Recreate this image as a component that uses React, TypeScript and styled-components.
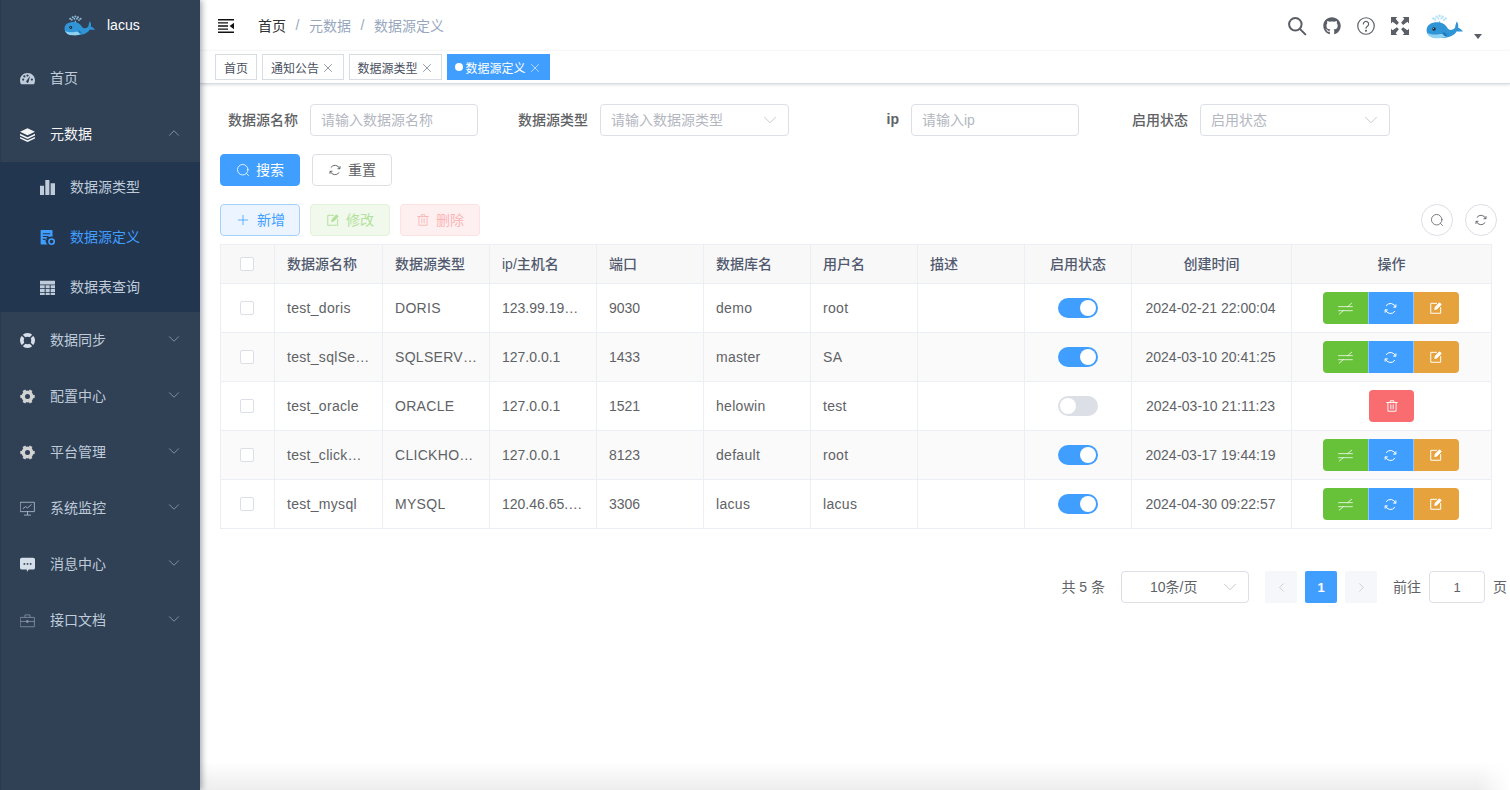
import React from 'react';
import styled, { createGlobalStyle } from 'styled-components';
import { ChevronDown, ChevronUp, ChevronLeft, ChevronRight, Plus, X } from 'lucide-react';
import { FaGithub } from 'react-icons/fa';

const Global = createGlobalStyle`
  html, body { margin: 0; padding: 0; height: 100%; overflow: hidden; background: #fff; }
  body, input, button { font-family: "Liberation Sans", "Noto Sans CJK SC", sans-serif; }
  * { box-sizing: border-box; }
`;

const Shell = styled.div`display: flex; width: 1510px; height: 790px; overflow: hidden; position: relative;`;
const Sidebar = styled.aside`
  width: 200px; flex: none; height: 790px; background: #304156; position: relative; z-index: 3;
  box-shadow: 2px 0 6px rgba(0,21,41,.35), inset 1px 0 0 #2a394c;
`;
const Logo = styled.div`
  height: 50px; display: flex; align-items: center; gap: 12px; padding-left: 64px;
  color: #fff; font-size: 14px;
`;
const MenuRow = styled.div<{ $open?: boolean }>`
  height: 56px; display: flex; align-items: center; padding: 0 17px 0 20px; gap: 15px; font-size: 14px;
  color: ${p => (p.$open ? '#f4f4f5' : '#bfcbd9')};
`;
const MenuLabel = styled.span`flex: 1; padding-bottom: 2px;`;
const Arrow = styled.span`display: block; color: #a9b5c3; height: 18px; margin-bottom: 2px;`;
const SubList = styled.div`background: #233650;`;
const SubRow = styled.div<{ $active?: boolean }>`
  height: 50px; display: flex; align-items: center; padding-left: 40px; gap: 15px; font-size: 14px;
  color: ${p => (p.$active ? '#409eff' : '#bfcbd9')};
`;
const Main = styled.main`flex: 1; min-width: 0; display: flex; flex-direction: column;`;
const Header = styled.header`
  height: 51px; flex: none; display: flex; align-items: center; padding-left: 18px; background: #fff;
  box-shadow: 0 1px 3px rgba(0,21,41,.06); position: relative; z-index: 1;
`;
const Crumbs = styled.nav`display: flex; align-items: center; font-size: 14px; margin-left: 24px; color: #97a8be; padding-bottom: 2px;`;
const CrumbHome = styled.span`color: #303133;`;
const Sep = styled.i`font-style: normal; color: #97a8be; margin: 0 9px; font-weight: 400; width: 5px; text-align: center; font-size: 14px;`;
const HeaderRight = styled.div`margin-left: auto; display: flex; align-items: center; gap: 16px; padding-right: 28px; color: #5a5e66;`;
const AvatarWrap = styled.div`display: flex; align-items: flex-end; margin-left: 1px; padding-top: 2px; position: relative; gap: 11px;`;
const Caret = styled.i`
  width: 0; height: 0; border-left: 4px solid transparent; border-right: 4px solid transparent;
  border-top: 5px solid #5a5e66; margin-bottom: 0; margin-right: 0;
`;
const TagBar = styled.div`
  height: 33px; flex: none; display: flex; align-items: flex-start; gap: 5px; padding: 3px 0 0 15px; background: #fff;
  border-bottom: 1px solid #d8dce5; box-shadow: 0 1px 3px rgba(0,0,0,.12), 0 0 3px rgba(0,0,0,.04);
  position: relative; z-index: 1;
`;
const Tag = styled.div<{ $active?: boolean; $w: number }>`
  height: 26px; width: ${p => p.$w}px; display: flex; align-items: center; justify-content: center; font-size: 12px;
  border: 1px solid ${p => (p.$active ? '#409eff' : '#d8dce5')};
  background: ${p => (p.$active ? '#409eff' : '#fff')}; color: ${p => (p.$active ? '#fff' : '#495060')};
  svg { margin-left: 2px; margin-top: 2px; }
`;
const Dot = styled.b`width: 8px; height: 8px; border-radius: 50%; background: #fff; margin-right: 2px;`;
const Content = styled.div`flex: 1; padding: 20px 18px 0 20px; position: relative;`;
const FormRow = styled.div`display: flex; align-items: center; gap: 10px;`;
const Field = styled.div<{ $lw: number; $iw: number; $bold?: boolean }>`
  display: flex; align-items: center;
  label { width: ${p => p.$lw}px; padding: 0 12px 2px 0; text-align: right; font-size: 14px; font-weight: ${p => (p.$bold ? 700 : 500)}; color: #606266; white-space: nowrap; }
  > div { width: ${p => p.$iw}px; }
`;
const InputBox = styled.div`
  height: 32px; border: 1px solid #dcdfe6; border-radius: 4px; background: #fff; display: flex; align-items: center;
  padding: 0 7px 2px 10px; font-size: 14px; color: #b4b7bf; justify-content: space-between;
  svg { margin-top: 2px; }
`;
const ButtonRow = styled.div`display: flex; align-items: center; gap: 12px; margin-top: 18px;`;
const ToolRow = styled.div`display: flex; align-items: center; gap: 10px; margin-top: 18px; margin-bottom: 8px; height: 32px;`;
const Btn = styled.button<{ $kind: 'primary' | 'plain' | 'add' | 'edit' | 'del' }>`
  width: 80px; height: 32px; border-radius: 4px; font-size: 14px; display: flex; align-items: center; justify-content: center; gap: 6px; padding: 0 0 2px;
  svg { margin-top: 2px; }
  ${p => ({
    primary: 'background:#409eff;border:1px solid #409eff;color:#fff;',
    plain: 'background:#fff;border:1px solid #dcdfe6;color:#606266;',
    add: 'background:#ecf5ff;border:1px solid #a6d0ff;color:#409eff;',
    edit: 'background:#f0f9eb;border:1px solid #e1f3d8;color:#b3e19d;',
    del: 'background:#fef0f0;border:1px solid #fde2e2;color:#fab6b6;',
  }[p.$kind])}
`;
const Spacer = styled.div`flex: 1;`;
const RoundBtn = styled.button`
  width: 32px; height: 32px; border-radius: 50%; border: 1px solid #dcdfe6; background: #fff; color: #606266;
  display: flex; align-items: center; justify-content: center; padding: 0; margin-left: 2px;
  &:last-child { margin-right: -5px; }
`;
const TableWrap = styled.div`width: 1272px; border: 1px solid #ebeef5; border-bottom: none;`;
const Row = styled.div<{ $head?: boolean; $zebra?: boolean }>`
  display: grid; grid-template-columns: 54px 108px 107px 107px 107px 107px 107px 107px 107px 160px 1fr;
  height: ${p => (p.$head ? 39 : 49)}px; border-bottom: 1px solid #ebeef5;
  background: ${p => (p.$head ? '#f8f8f9' : p.$zebra ? '#fafafa' : '#fff')};
  font-size: 14px; color: ${p => (p.$head ? '#515a6e' : '#606266')}; font-weight: ${p => (p.$head ? 500 : 400)};
`;
const Cell = styled.div<{ $center?: boolean; $wide?: boolean; $head?: boolean }>`
  display: flex; align-items: center; justify-content: ${p => (p.$center ? 'center' : 'flex-start')};
  padding: 0 ${p => (p.$center ? 0 : 12)}px ${p => (p.$head ? 2 : 0)}px; border-right: 1px solid #ebeef5; white-space: nowrap; overflow: hidden;
  letter-spacing: ${p => (p.$wide ? '.3px' : '0')};
  &:last-child { border-right: none; }
`;
const CheckCell = styled(Cell)`padding-right: 2px;`;
const DateCell = styled(Cell)`padding-right: 2px;`;
const Check = styled.i`width: 14px; height: 14px; border: 1px solid #dcdfe6; border-radius: 2px; background: #fff; display: block;`;
const Switch = styled.i<{ $on: boolean }>`
  width: 40px; height: 20px; border-radius: 10px; display: block; position: relative;
  background: ${p => (p.$on ? '#409eff' : '#dcdfe6')};
  &::after { content: ''; position: absolute; top: 2px; left: ${p => (p.$on ? 22 : 2)}px; width: 16px; height: 16px; border-radius: 50%; background: #fff; }
`;
const Group = styled.div`display: flex; border-radius: 4px; overflow: hidden; height: 32px; margin-right: 2px;`;
const GroupBtn = styled.div<{ $c: string }>`
  width: 45px; height: 32px; display: flex; align-items: center; justify-content: center; color: #fff; background: ${p => p.$c};
  & + & { border-left: 1px solid #8cc5ff; }
  &:last-child { width: 46px; }
`;
const DeleteBtn = styled.div`width: 45px; height: 32px; border-radius: 4px; background: #f96c70; color: #fff; display: flex; align-items: center; justify-content: center;`;
const Pager = styled.div`
  display: flex; align-items: center; justify-content: flex-end; margin-top: 42px; height: 32px; font-size: 14px; color: #606266;
  margin-right: -18px; padding-right: 3px;
`;
const PagerText = styled.span<{ $gap?: boolean }>`padding-bottom: 2px; margin-left: ${p => (p.$gap ? 8 : 0)}px;`;
const PagerSelect = styled.div`
  width: 128px; height: 32px; border: 1px solid #dcdfe6; border-radius: 4px; margin: 0 16px; display: flex; align-items: center;
  padding: 0 7px 2px 28px; justify-content: space-between;
  svg { margin-top: 2px; }
`;
const PagerBtn = styled.div<{ $active?: boolean }>`
  width: 32px; height: 32px; border-radius: 2px; margin-right: 8px; display: flex; align-items: center; justify-content: center;
  background: ${p => (p.$active ? '#409eff' : '#f5f7fa')}; color: ${p => (p.$active ? '#fff' : '#b4b9c2')}; font-weight: 700; font-size: 13px;
`;
const PagerInput = styled.div`
  width: 56px; height: 32px; border: 1px solid #dcdfe6; border-radius: 4px; margin: 0 8px; font-size: 13px;
  display: flex; align-items: center; justify-content: center;
`;
const BottomFade = styled.div`
  position: absolute; left: 0; right: 0; bottom: 0; height: 28px; pointer-events: none;
  background: linear-gradient(to bottom, rgba(0,0,0,0), rgba(0,0,0,.07));
  mask-image: linear-gradient(to right, #000 97.5%, transparent 100%);
`;
const IconBox = styled.div<{ $c: string }>`display: block; color: ${p => p.$c};`;

const Whale = ({ w, h }: { w: number; h: number }) => (
  <svg width={w} height={h} viewBox="0 0 60 40" style={{ display: 'block' }}>
    <g fill="#a6d9f3" opacity=".8">
      <circle cx="12" cy="7" r="2" /><circle cx="17" cy="4" r="2" /><circle cx="22" cy="2.500" r="2" /><circle cx="27" cy="4" r="2" />
      <circle cx="32" cy="7" r="2" /><circle cx="15" cy="9" r="1.800" /><circle cx="20" cy="7" r="1.800" /><circle cx="25" cy="7" r="1.800" /><circle cx="29" cy="9.500" r="1.800" />
    </g>
    <path d="M21 11v4h2v-4z" fill="#8fcdee" />
    <path d="M1 26C1 17 9 13 18 13c9 0 14 4 17 10 3 4 9 3 12-1 1-3 1-7 3-10 2 3 3 7 2 10 3 1 6 3 8 6-4 .5-8 0-10-.500-5 8-14 11-28 11C8 39 1 34 1 26z" fill="#2f95d6" />
    <path d="M2 30c5 3 12 3.500 19 2.500 6-1 10 0 14 3-6 3-11 4-18 3.500C9 38.500 4 36 2 30z" fill="#8fd2f2" />
    <circle cx="13" cy="24" r="2.800" fill="#1d2a38" />
    <circle cx="12.300" cy="23.200" r=".8" fill="#fff" />
    <path d="M27 30c3-1 7 2 8 6-4 .5-8-2-8-6z" fill="#1f78b8" />
  </svg>
);

type IP = { s?: number };
const Svg = ({ s = 15, children, fill = 'none', sw = 1.4 }: { s?: number; children: React.ReactNode; fill?: string; sw?: number }) => (
  <svg width={s} height={s} viewBox="0 0 24 24" fill={fill} stroke={fill === 'none' ? 'currentColor' : 'none'} strokeWidth={sw} strokeLinecap="round" strokeLinejoin="round" style={{ flex: 'none', display: 'block' }}>{children}</svg>
);
const ThinSearch = ({ s = 14 }: IP) => <Svg s={s}><circle cx="11.500" cy="11.500" r="9" /><path d="M18 18l3.500 3.500" /></Svg>;
const ThinRefresh = ({ s = 14 }: IP) => <Svg s={s} sw={1.6}><path d="M20 9.500A8.600 8.600 0 0 0 5.200 7.200" /><path d="M4 14.500a8.600 8.600 0 0 0 14.800 2.300" /><path d="M17 9.800h3.600V6" /><path d="M7 14.200H3.400V18" /></Svg>;
const ThinEdit = ({ s = 14 }: IP) => <Svg s={s} sw={1.7}><path d="M13 4H3v17h17V11" /><path d="M10 14l.8-3.500L18 3l3 3-7.500 7.500z" fill="currentColor" /></Svg>;
const ThinTrash = ({ s = 14 }: IP) => <Svg s={s} sw={1.6}><path d="M3 6h18" /><path d="M9 6V3h6v3" /><path d="M5 6v15h14V6" /><path d="M10 10v7M14 10v7" /></Svg>;
const Sync = ({ s = 14 }: IP) => <Svg s={s} sw={1.2}><path d="M1 9h22" /><path d="M15.500 9L22 3.500" /><path d="M23 15.500H1" /><path d="M8.500 15.500L2 21" /></Svg>;

const Gauge = () => <Svg fill="#bfcbd9"><path d="M12 3C5 3 0 8.500 0 15c0 2.200.7 4.100 1.600 6h20.800c.9-1.900 1.600-3.800 1.600-6 0-6.500-5-12-12-12zm0 2.400a1.800 1.800 0 1 1 0 3.600 1.800 1.800 0 0 1 0-3.600zM5 15.500a1.800 1.800 0 1 1 0-3.600 1.800 1.800 0 0 1 0 3.600zm2-5a1.800 1.800 0 1 1 0-3.600 1.800 1.800 0 0 1 0 3.600zM12 19a2.200 2.200 0 0 1-1-4.100L16 8l-2 8.500A2.200 2.200 0 0 1 12 19zm7-3.500a1.800 1.800 0 1 1 0-3.600 1.800 1.800 0 0 1 0 3.600z" /></Svg>;
const Layers = () => <Svg fill="#f4f4f5"><path d="M12 2L0 7.500 12 13l12-5.500z" /><path d="M0 10.800L12 16.300l12-5.500v2.700L12 19 0 13.500z" /><path d="M0 15.800L12 21.300l12-5.500v2.700L12 24 0 18.500z" /></Svg>;
const Bars = () => <Svg fill="#bfcbd9"><path d="M0 9h6.500v15H0zM8.500 0H15v24H8.500zM17 5h7v19h-7z" /></Svg>;
const DataDef = () => <Svg fill="#409eff"><path d="M2 0h17a1 1 0 0 1 1 1v10a7 7 0 0 0-8 12H2a1 1 0 0 1-1-1V1a1 1 0 0 1 1-1zM4.500 5v1.800h12V5zm0 4.500v1.800h12V9.500zm0 4.500v1.800h6V14z" /><path fillRule="evenodd" d="M18.500 13a5.500 5.500 0 1 0 .01 11 5.500 5.500 0 0 0-.01-11zm0 2.500a3 3 0 1 1-.01 6 3 3 0 0 1 .01-6z" /></Svg>;
const Grid = () => <Svg fill="#bfcbd9"><path d="M0 1h24v6H0zM0 8.500h7.500v4.500H0zM9 8.500h6.500v4.500H9zM17 8.500h7v4.500h-7zM0 14.500h7.500V19H0zM9 14.500h6.500V19H9zM17 14.500h7V19h-7zM0 20.500h7.500V24H0zM9 20.500h6.500V24H9zM17 20.500h7V24h-7z" /></Svg>;
const Ring = () => <Svg fill="#d7e0ea"><path fillRule="evenodd" d="M12 0a12 12 0 1 0 0 24 12 12 0 0 0 0-24zm0 6a6 6 0 1 1 0 12 6 6 0 0 1 0-12z" /><path d="M10.700 -1h2.600v8h-2.600zM10.700 17h2.600v8h-2.600zM-1 10.700h8v2.600h-8zM17 10.700h8v2.600h-8z" fill="#304156" transform="rotate(45 12 12)" /></Svg>;
const Gear = () => (
  <Svg fill="#d2d2d2">
    <path fillRule="evenodd" d="M12 2.500a9.500 9.500 0 1 0 0 19 9.500 9.500 0 0 0 0-19zM12 8a4 4 0 1 1 0 8 4 4 0 0 1 0-8z" />
    {[0, 60, 120, 180, 240, 300].map(a => <path key={a} d="M9.500 0.500h5v4h-5z" transform={`rotate(${a + 30} 12 12)`} />)}
  </Svg>
);
const Monitor = () => <IconBox $c="#bfcbd9"><Svg sw={1.200}><path d="M1 2h22v15H1z" /><path d="M5 12l4-3 3 2 6-5" /><path d="M12 17v5M7 22.500h10" /></Svg></IconBox>;
const Chat = () => <Svg fill="#d5dfea"><path fillRule="evenodd" d="M3 1h18a3 3 0 0 1 3 3v13a3 3 0 0 1-3 3h-7l-3 4v-4H3a3 3 0 0 1-3-3V4a3 3 0 0 1 3-3zm4 8.500a1.500 1.500 0 1 0 0 3 1.500 1.500 0 0 0 0-3zm5 0a1.500 1.500 0 1 0 0 3 1.500 1.500 0 0 0 0-3zm5 0a1.500 1.500 0 1 0 0 3 1.500 1.500 0 0 0 0-3z" /></Svg>;
const Case = () => <IconBox $c="#8793a1"><Svg sw={1.300}><path d="M1 7h22v15H1z" /><path d="M8 7V3h8v4" /><path d="M1 13.500h22" /><path d="M11 12h2v3h-2z" fill="currentColor" /></Svg></IconBox>;

const Hamburger = () => (
  <svg width="16" height="16" viewBox="0 0 16 16" style={{ display: 'block' }}>
    <path d="M0 1h16v1.400H0zM0 13.600h16V15H0zM0 7.300h10v1.400H0zM0 4.300h10v1.200H0zM0 10.500h10v1.200H0z" fill="#111" />
    <path d="M16 4.800v6.400L11.600 8z" fill="#111" />
  </svg>
);
const HeadSearch = () => <Svg s={20} sw={2.400}><circle cx="10" cy="10" r="7.500" /><path d="M16 16l6 6" /></Svg>;
const Help = () => (
  <svg width="18" height="18" viewBox="0 0 24 24" fill="none" stroke="currentColor" strokeWidth="1.600" strokeLinecap="round" style={{ display: 'block' }}>
    <circle cx="12" cy="12" r="11" /><path d="M8.500 9.300a3.500 3.500 0 1 1 5.400 3c-1.200.8-1.900 1.400-1.900 2.700" /><circle cx="12" cy="18.300" r=".6" fill="currentColor" />
  </svg>
);
const Full = () => (
  <svg width="18" height="18" viewBox="0 0 24 24" fill="currentColor" style={{ display: 'block' }}>
    <path d="M0 0h8.500L6.200 2.300 10.500 7.800 7.800 10.500 2.300 6.200 0 8.500z" /><path d="M24 0h-8.500l2.300 2.300-4.300 5.500 2.700 2.700 5.500-4.300L24 8.500z" />
    <path d="M0 24h8.500l-2.300-2.300 4.300-5.500-2.700-2.700-5.500 4.300L0 15.500z" /><path d="M24 24h-8.500l2.300-2.300-4.300-5.500 2.700-2.700 5.500 4.300 2.300-2.300z" />
  </svg>
);

const rows = [
  ['test_doris', 'DORIS', '123.99.19…', '9030', 'demo', 'root', '', true, '2024-02-21 22:00:04'],
  ['test_sqlSe…', 'SQLSERV…', '127.0.0.1', '1433', 'master', 'SA', '', true, '2024-03-10 20:41:25'],
  ['test_oracle', 'ORACLE', '127.0.0.1', '1521', 'helowin', 'test', '', false, '2024-03-10 21:11:23'],
  ['test_click…', 'CLICKHO…', '127.0.0.1', '8123', 'default', 'root', '', true, '2024-03-17 19:44:19'],
  ['test_mysql', 'MYSQL', '120.46.65.…', '3306', 'lacus', 'lacus', '', true, '2024-04-30 09:22:57'],
] as const;

const heads = ['数据源名称', '数据源类型', 'ip/主机名', '端口', '数据库名', '用户名', '描述'];
const wideCols = [0, 1, 4, 5];

const menus: [React.ReactNode, string][] = [
  [<Ring />, '数据同步'], [<Gear />, '配置中心'], [<Gear />, '平台管理'],
  [<Monitor />, '系统监控'], [<Chat />, '消息中心'], [<Case />, '接口文档'],
];

export default function App() {
  return (
    <Shell>
      <Global />
      <Sidebar>
        <Logo><Whale w={31} h={21} />lacus</Logo>
        <MenuRow><Gauge /><MenuLabel>首页</MenuLabel></MenuRow>
        <MenuRow $open><Layers /><MenuLabel>元数据</MenuLabel><Arrow><ChevronUp size={18} strokeWidth={0.9} /></Arrow></MenuRow>
        <SubList>
          <SubRow><Bars /><MenuLabel>数据源类型</MenuLabel></SubRow>
          <SubRow $active><DataDef /><MenuLabel>数据源定义</MenuLabel></SubRow>
          <SubRow><Grid /><MenuLabel>数据表查询</MenuLabel></SubRow>
        </SubList>
        {menus.map(([icon, label]) => (
          <MenuRow key={label}>{icon}<MenuLabel>{label}</MenuLabel><Arrow><ChevronDown size={18} strokeWidth={0.9} /></Arrow></MenuRow>
        ))}
      </Sidebar>
      <Main>
        <Header>
          <Hamburger />
          <Crumbs><CrumbHome>首页</CrumbHome><Sep>/</Sep>元数据<Sep>/</Sep>数据源定义</Crumbs>
          <HeaderRight>
            <HeadSearch />
            <FaGithub size={18} />
            <Help />
            <Full />
            <AvatarWrap><Whale w={37} h={25} /><Caret /></AvatarWrap>
          </HeaderRight>
        </Header>
        <TagBar>
          <Tag $w={42}>首页</Tag>
          <Tag $w={82}>通知公告<X size={14} strokeWidth={1} /></Tag>
          <Tag $w={93}>数据源类型<X size={14} strokeWidth={1} /></Tag>
          <Tag $w={103} $active><Dot />数据源定义<X size={14} strokeWidth={1} /></Tag>
        </TagBar>
        <Content>
          <FormRow>
            <Field $lw={90} $iw={168}><label>数据源名称</label><InputBox>请输入数据源名称</InputBox></Field>
            <Field $lw={112} $iw={189}><label>数据源类型</label><InputBox>请输入数据源类型<ChevronDown size={22} strokeWidth={0.8} /></InputBox></Field>
            <Field $lw={112} $iw={168} $bold><label>ip</label><InputBox>请输入ip</InputBox></Field>
            <Field $lw={111} $iw={190}><label>启用状态</label><InputBox>启用状态<ChevronDown size={22} strokeWidth={0.8} /></InputBox></Field>
          </FormRow>
          <ButtonRow>
            <Btn $kind="primary"><ThinSearch />搜索</Btn>
            <Btn $kind="plain"><ThinRefresh />重置</Btn>
          </ButtonRow>
          <ToolRow>
            <Btn $kind="add"><Plus size={16} strokeWidth={1.2} />新增</Btn>
            <Btn $kind="edit"><ThinEdit />修改</Btn>
            <Btn $kind="del"><ThinTrash />删除</Btn>
            <Spacer />
            <RoundBtn><ThinSearch /></RoundBtn>
            <RoundBtn><ThinRefresh /></RoundBtn>
          </ToolRow>
          <TableWrap>
            <Row $head>
              <CheckCell $center><Check /></CheckCell>
              {heads.map(h => <Cell key={h} $head>{h}</Cell>)}
              <Cell $center $head>启用状态</Cell>
              <Cell $center $head>创建时间</Cell>
              <Cell $center $head>操作</Cell>
            </Row>
            {rows.map((r, i) => (
              <Row key={r[0]} $zebra={i % 2 === 1}>
                <CheckCell $center><Check /></CheckCell>
                {r.slice(0, 7).map((v, j) => <Cell key={j} $wide={wideCols.includes(j)}>{v as string}</Cell>)}
                <Cell $center><Switch $on={r[7] as boolean} /></Cell>
                <DateCell $center>{r[8]}</DateCell>
                <Cell $center>
                  {r[7] ? (
                    <Group>
                      <GroupBtn $c="#67c23a"><Sync s={15} /></GroupBtn>
                      <GroupBtn $c="#409eff"><ThinRefresh s={15} /></GroupBtn>
                      <GroupBtn $c="#e6a23c"><ThinEdit /></GroupBtn>
                    </Group>
                  ) : (
                    <DeleteBtn><ThinTrash /></DeleteBtn>
                  )}
                </Cell>
              </Row>
            ))}
          </TableWrap>
          <Pager>
            <PagerText>共 5 条</PagerText>
            <PagerSelect>10条/页<ChevronDown size={22} strokeWidth={0.8} color="#b4b7bf" /></PagerSelect>
            <PagerBtn><ChevronLeft size={15} strokeWidth={1} /></PagerBtn>
            <PagerBtn $active>1</PagerBtn>
            <PagerBtn><ChevronRight size={15} strokeWidth={1} /></PagerBtn>
            <PagerText $gap>前往</PagerText>
            <PagerInput>1</PagerInput>
            <PagerText>页</PagerText>
          </Pager>
          <BottomFade />
        </Content>
      </Main>
    </Shell>
  );
}
